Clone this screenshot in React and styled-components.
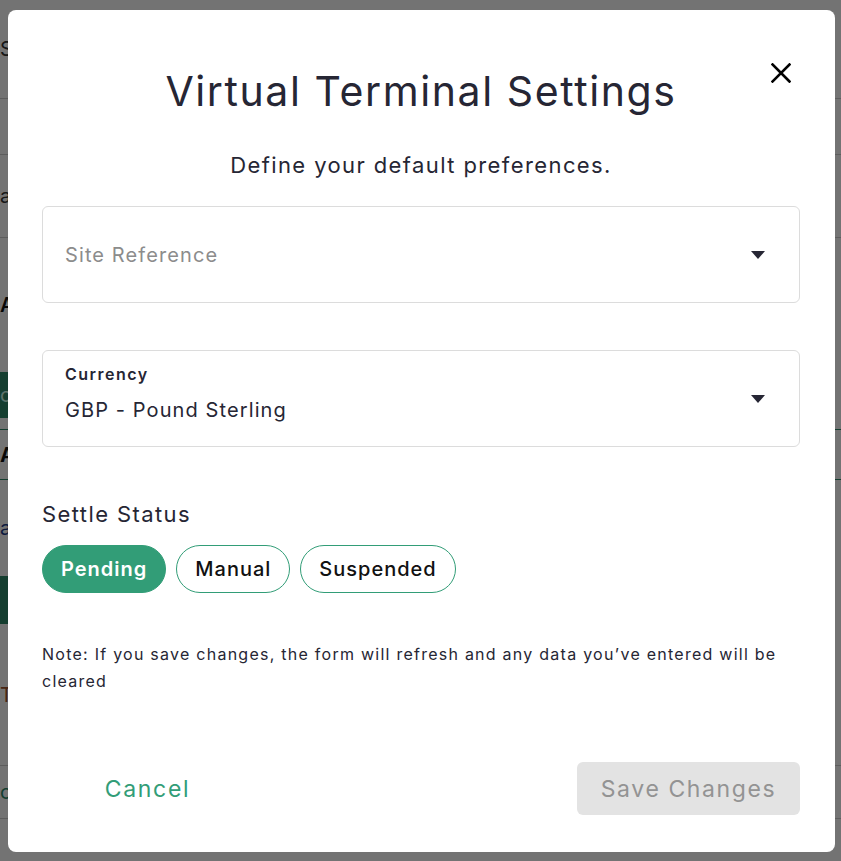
import React from "react";
import styled, { createGlobalStyle } from "styled-components";

const GlobalStyle = createGlobalStyle`
  html, body { margin: 0; padding: 0; background: #ffffff; }
  body { font-family: "Inter", "Open Sans", sans-serif; color: #262634; }
  * { box-sizing: border-box; }
`;

const GREEN = "#329d77";

/* ---------- background page (behind the overlay) ---------- */
const BgPage = styled.div`
  width: 841px;
  height: 861px;
  overflow: hidden;
  display: flex;
  flex-direction: column;
  font-family: "Inter", sans-serif;
  font-size: 20px;
`;

const BgRow = styled.div`
  height: ${(p) => p.$h}px;
  display: flex;
  align-items: center;
  justify-content: space-between;
  padding: 0 0 0 ${(p) => p.$indent ?? 0}px;
  border-bottom: ${(p) => (p.$line ? `1px solid ${p.$line}` : "none")};
  color: ${(p) => p.$color || "#333"};
  font-weight: ${(p) => p.$weight || 400};
`;

const BgBar = styled.div`
  width: ${(p) => p.$w}px;
  height: ${(p) => p.$h}px;
  background: #2f8a6b;
  color: #cfe;
  display: flex;
  align-items: center;
`;

const Overlay = styled.div`
  position: fixed;
  inset: 0;
  background: rgba(0, 0, 0, 0.55);
  display: flex;
  padding: 10px 6px 9px 8px;
`;

/* ---------- modal ---------- */
const Modal = styled.div`
  position: relative;
  flex: 1;
  background: #ffffff;
  border-radius: 8px;
  padding: 57px 35px 37px 34px;
  display: flex;
  flex-direction: column;
`;

const CloseButton = styled.button`
  position: absolute;
  top: 53px;
  right: 44px;
  width: 20px;
  height: 20px;
  padding: 0;
  border: none;
  background: none;
  cursor: pointer;
  display: flex;
`;

const Title = styled.h1`
  margin: 0;
  text-align: center;
  font-family: "Inter", sans-serif;
  font-weight: 400;
  font-size: 41px;
  line-height: 48px;
  letter-spacing: 1.6px;
  color: #262634;
`;

const Subtitle = styled.p`
  margin: 34px 0 0;
  text-align: center;
  font-size: 22px;
  line-height: 32px;
  letter-spacing: 1.4px;
  color: #262634;
`;

const Field = styled.div`
  margin-top: ${(p) => p.$mt}px;
  height: 97px;
  border: 1px solid #dcdcdc;
  border-radius: 6px;
  display: flex;
  align-items: center;
  justify-content: space-between;
  padding: 0 34px 0 22px;
`;

const FieldBody = styled.div`
  display: flex;
  flex-direction: column;
  gap: ${(p) => p.$gap || 0}px;
  margin-bottom: ${(p) => p.$lift || 0}px;
`;

const FieldLabel = styled.span`
  font-size: 16px;
  line-height: 20px;
  font-weight: 600;
  letter-spacing: 1.5px;
  color: #262634;
`;

const FieldValue = styled.span`
  font-size: 20px;
  line-height: 28px;
  letter-spacing: 1.1px;
  color: ${(p) => (p.$placeholder ? "#8c8c8c" : "#262634")};
`;

const Caret = styled.span`
  width: 0;
  height: 0;
  border-left: 7.5px solid transparent;
  border-right: 7.5px solid transparent;
  border-top: 8px solid #262634;
`;

const SectionLabel = styled.div`
  margin-top: 51px;
  font-size: 22px;
  line-height: 32px;
  letter-spacing: 1.4px;
  color: #262634;
`;

const ChipRow = styled.div`
  margin-top: 15px;
  display: flex;
  gap: 10px;
`;

const Chip = styled.button`
  height: 48px;
  padding: 0 18px;
  border-radius: 24px;
  border: 1px solid ${GREEN};
  background: ${(p) => (p.$active ? GREEN : "#ffffff")};
  color: ${(p) => (p.$active ? "#ffffff" : "#111111")};
  font-family: "Inter", sans-serif;
  font-size: 20px;
  font-weight: ${(p) => (p.$active ? 600 : 500)};
  letter-spacing: 1px;
  cursor: pointer;
`;

const Note = styled.p`
  margin: 48px 0 0;
  font-size: 16px;
  line-height: 27px;
  letter-spacing: 1.25px;
  color: #262634;
`;

const Footer = styled.div`
  margin-top: auto;
  display: flex;
  justify-content: space-between;
  align-items: center;
`;

const CancelButton = styled.button`
  width: 211px;
  height: 53px;
  border: none;
  background: none;
  color: ${GREEN};
  font-family: "Inter", sans-serif;
  font-size: 23px;
  letter-spacing: 1.7px;
  cursor: pointer;
`;

const SaveButton = styled.button`
  width: 223px;
  height: 53px;
  border: none;
  border-radius: 6px;
  background: #e3e3e3;
  color: #939393;
  font-family: "Inter", sans-serif;
  font-size: 23px;
  letter-spacing: 1.6px;
`;

const CloseIcon = () => (
  <svg width="20" height="20" viewBox="0 0 20 20" fill="none">
    <path d="M1.5 1.5L18.5 18.5M18.5 1.5L1.5 18.5" stroke="#000" strokeWidth="2.6" strokeLinecap="square" />
  </svg>
);

export default function App() {
  return (
    <>
      <GlobalStyle />
      <BgPage>
        <BgRow $h={99} $line="#cfcfcf" $indent={-6}>Settings</BgRow>
        <BgRow $h={56} $line="#cfcfcf" />
        <BgRow $h={83} $line="#cfcfcf" $indent={-14}>ad</BgRow>
        <BgRow $h={134} $indent={-12} $weight={600} $color="#111">Au</BgRow>
        <BgBar $w={420} $h={46}>o</BgBar>
        <BgRow $h={12} $line="#2f8a6b" />
        <BgRow $h={50} $line="#2f8a6b" $indent={-4} $weight={700} $color="#111">A</BgRow>
        <BgRow $h={96} $indent={-12} $color="#1b3a8a">ad</BgRow>
        <BgBar $w={420} $h={48} />
        <BgRow $h={142} $line="#cfcfcf" $indent={-2} $color="#a0522d">Tr</BgRow>
        <BgRow $h={53} $line="#cfcfcf" $indent={-10} $color="#2f8a6b">o</BgRow>
      </BgPage>
      <Overlay>
        <Modal role="dialog" aria-modal="true">
          <CloseButton aria-label="Close">
            <CloseIcon />
          </CloseButton>
          <Title>Virtual Terminal Settings</Title>
          <Subtitle>Define your default preferences.</Subtitle>
          <Field $mt={25}>
            <FieldBody>
              <FieldValue $placeholder>Site Reference</FieldValue>
            </FieldBody>
            <Caret />
          </Field>
          <Field $mt={47}>
            <FieldBody $gap={12} $lift={9}>
              <FieldLabel>Currency</FieldLabel>
              <FieldValue>GBP - Pound Sterling</FieldValue>
            </FieldBody>
            <Caret />
          </Field>
          <SectionLabel>Settle Status</SectionLabel>
          <ChipRow>
            <Chip $active>Pending</Chip>
            <Chip>Manual</Chip>
            <Chip>Suspended</Chip>
          </ChipRow>
          <Note>
            Note: If you save changes, the form will refresh and any data you’ve entered will be cleared
          </Note>
          <Footer>
            <CancelButton>Cancel</CancelButton>
            <SaveButton disabled>Save Changes</SaveButton>
          </Footer>
        </Modal>
      </Overlay>
    </>
  );
}
